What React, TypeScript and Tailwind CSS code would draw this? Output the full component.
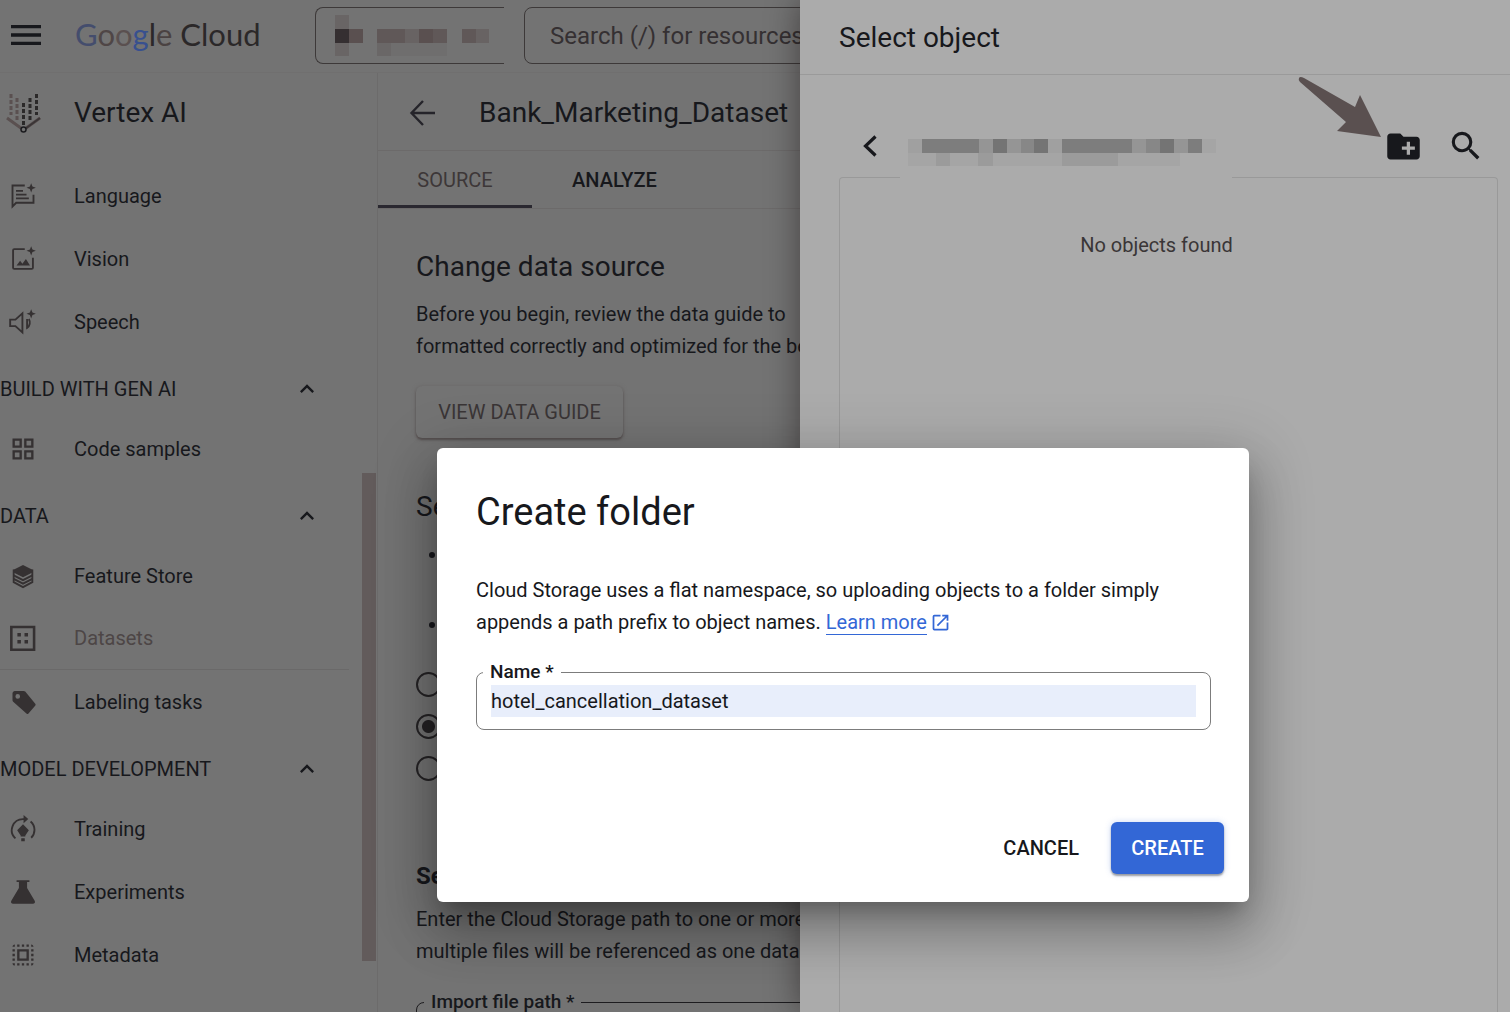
import type { ReactNode } from "react";
import {
  MdCreateNewFolder,
  MdGridView,
  MdKeyboardArrowUp,
  MdMenu,
  MdOpenInNew,
  MdSearch,
  MdSelectAll,
} from "react-icons/md";

const SPARKLE = "M19 1l1.1 2.9L23 5l-2.9 1.1L19 9l-1.1-2.9L15 5l2.9-1.1z";

function Icon({ children }: { children: ReactNode }) {
  return (
    <svg viewBox="0 0 24 24" className="size-7" fill="none" stroke="currentColor" strokeWidth="1.6" aria-hidden="true">
      {children}
    </svg>
  );
}

const LanguageIcon = () => (
  <Icon>
    <path d="M13.5 3H3v18l3.2-3.2H21V11" />
    <path d="M6 7.5h6M6 10.800h9M6 14h11" strokeWidth="1.5" />
    <path d={SPARKLE} fill="currentColor" stroke="none" />
  </Icon>
);

const VisionIcon = () => (
  <Icon>
    <path d="M13.500 3.500H4.500a1 1 0 0 0-1 1v15a1 1 0 0 0 1 1h15a1 1 0 0 0 1-1V11" />
    <path d="M6.500 17.500l3-4 2 2.500 3-4 3.500 5.500z" fill="currentColor" stroke="none" />
    <path d={SPARKLE} fill="currentColor" stroke="none" />
  </Icon>
);

const SpeechIcon = () => (
  <Icon>
    <path d="M1 10v5.500h4.500l6 5.500V4.500l-6 5.500z" />
    <path d="M15.500 9.500v7.500c2.500-1.500 3-5 1.500-7.500" />
    <path d={SPARKLE} fill="currentColor" stroke="none" />
  </Icon>
);

const FeatureStoreIcon = () => (
  <Icon>
    <path d="M12 2.500l8.500 4.300v2L12 13 3.500 8.800v-2z" fill="currentColor" stroke="none" />
    <path d="M4 6.500v10.800L12 21.500l8-4.200V6.500" />
    <path d="M4 11.500l8 4 8-4M4 14.500l8 4 8-4" strokeWidth="1.800" />
  </Icon>
);

const DatasetIcon = () => (
  <Icon>
    <path d="M2 2.500h19.500v19.500H2z" strokeWidth="2.200" />
    <path d="M7.200 7.700h3v3h-3zM13.300 7.700h3v3h-3zM7.200 13.800h3v3h-3zM13.300 13.800h3v3h-3z" fill="currentColor" stroke="none" />
  </Icon>
);

const LabelIcon = () => (
  <Icon>
    <path
      d="M3 4.500C3 3.500 4 2.500 5 2.500h7.500c.6 0 1 .2 1.400.6l8.600 10.400c.5.6.4 1.300-.1 1.800l-5.700 6.500c-.6.6-1.500.6-2-.1L3.600 11.800c-.4-.4-.6-.9-.6-1.400zM7.500 5.200a2 2 0 1 0 0 4 2 2 0 0 0 0-4z"
      fill="currentColor"
      fillRule="evenodd"
      stroke="none"
    />
  </Icon>
);

const TrainingIcon = () => (
  <Icon>
    <path d="M5.500 20A9.500 9.500 0 0 1 12 3.500h2M18.500 5.500A9.500 9.500 0 0 1 19 19.500" />
    <path d="M12.500 0l4 3.500-4 3.500z" fill="currentColor" stroke="none" />
    <path d="M12 8l5 5-3 4.500v1h-4v-1L7 13zM10.500 20h3v2.500h-3z" fill="currentColor" stroke="none" />
  </Icon>
);

const ExperimentsIcon = () => (
  <Icon>
    <path d="M6.500 2h11v1.500H15.500v5l6.500 11c.8 1.500 0 2.500-1.500 2.500h-17C2 22 1.200 21 2 19.500l6.500-11v-5h-2z" fill="currentColor" stroke="none" />
  </Icon>
);

function VertexLogo() {
  return (
    <svg viewBox="0 0 36 42" className="h-[42px] w-9 shrink-0" fill="none" aria-hidden="true">
      <g strokeWidth="3" strokeDasharray="4 2">
        <path d="M5 2v21M11 6v22" stroke="#5a5050" />
        <path d="M17.500 11v22M24 6v22M30.500 2v21" stroke="#2b2929" />
      </g>
      <path d="M1 26l16.500 12L34 26" stroke="#5a5050" strokeWidth="3" />
      <path d="M17.500 38L34 26" stroke="#3a3536" strokeWidth="2" />
      <circle cx="17.500" cy="37.500" r="2.500" fill="#737373" stroke="#1c1c1f" strokeWidth="1.500" />
    </svg>
  );
}

function NavItem({ icon, label, active }: { icon: ReactNode; label: string; active?: boolean }) {
  return (
    <a
      href="#"
      className={
        active
          ? "mr-7 flex h-[63px] items-center border-b border-[#6a6969] pl-[9px] text-[#4d4646]"
          : "mr-7 flex h-[63px] items-center pl-[9px]"
      }
    >
      <span className="w-[65px] shrink-0 text-[28px] text-[#353132]">{icon}</span>
      <span>{label}</span>
    </a>
  );
}

function NavSection({ label }: { label: string }) {
  return (
    <button type="button" className="flex h-16 w-full items-center justify-between pt-[7px] pr-[56px] text-left">
      <span>{label}</span>
      <MdKeyboardArrowUp className="size-7" />
    </button>
  );
}

function Sidebar() {
  return (
    <nav className="relative w-[378px] shrink-0 border-r border-[#6c6b6b]">
      <div className="flex h-[78px] items-center pt-0.5 pl-1.5">
        <VertexLogo />
        <span className="ml-8 text-[28px]">Vertex AI</span>
      </div>
      <div className="pt-[13px]">
        <NavItem icon={<LanguageIcon />} label="Language" />
        <NavItem icon={<VisionIcon />} label="Vision" />
        <NavItem icon={<SpeechIcon />} label="Speech" />
        <NavSection label="BUILD WITH GEN AI" />
        <NavItem icon={<MdGridView />} label="Code samples" />
        <NavSection label="DATA" />
        <NavItem icon={<FeatureStoreIcon />} label="Feature Store" />
        <NavItem icon={<DatasetIcon />} label="Datasets" active />
        <NavItem icon={<LabelIcon />} label="Labeling tasks" />
        <NavSection label="MODEL DEVELOPMENT" />
        <NavItem icon={<TrainingIcon />} label="Training" />
        <NavItem icon={<ExperimentsIcon />} label="Experiments" />
        <NavItem icon={<MdSelectAll />} label="Metadata" />
      </div>
      <div className="absolute top-[400px] right-px h-[488px] w-3.5 bg-[#625b5b]" />
    </nav>
  );
}

function TopBar() {
  return (
    <header className="flex h-[73px] shrink-0 items-center border-b border-[#706f6f] pb-0.5 pl-1.5">
      <button type="button" aria-label="Main menu">
        <MdMenu className="size-10" />
      </button>
      <a href="#" className="ml-[29px] w-[240px] font-['Lato',sans-serif] text-[31px] whitespace-nowrap">
        <span className="text-[#444d6d]">G</span>
        <span className="text-[#4f4646]">o</span>
        <span className="text-[#5a5050]">o</span>
        <span className="text-[#38508f]">g</span>
        <span className="text-[#2b2829]">l</span>
        <span className="text-[#4a4242]">e</span>
        <span className="text-[#2b2829]"> Cloud</span>
      </a>
      <button
        type="button"
        aria-label="Select a project"
        className="flex h-[57px] w-[189px] shrink-0 items-center rounded-l-lg border border-r-0 border-[#3d3939] pl-[19px]"
      >
        <svg viewBox="0 0 155 41" className="h-[41px] w-[155px]" aria-hidden="true">
          <path d="M0 0h14v41H0z" fill="#696565" />
          <path d="M0 14h14v14H0z" fill="#352f31" />
          <path d="M14 14h14v14H14zM84 14h14v14H84z" fill="#5a5050" />
          <path d="M42 14h28v14H42zM98 14h14v14H98zM127 14h14v14h-14z" fill="#605858" />
          <path d="M70 14h14v14H70zM141 14h13v14h-13z" fill="#686363" />
          <path d="M42 28h14v13H42z" fill="#6a6767" />
          <path d="M56 28h56v13H56z" fill="#6f6e6e" />
        </svg>
      </button>
      <input
        type="text"
        aria-label="Search"
        placeholder="Search (/) for resources, docs, products, and more"
        className="ml-5 h-[57px] min-w-0 flex-1 rounded-lg border border-[#3d3939] bg-transparent pt-0.5 pl-[25px] text-2xl placeholder:text-[#353032]"
      />
    </header>
  );
}

function SourceRadio({ checked }: { checked?: boolean }) {
  return (
    <input
      type="radio"
      name="source"
      aria-label="Data source"
      defaultChecked={checked}
      className="block size-[25px] appearance-none rounded-full border-2 border-[#252325] checked:bg-[radial-gradient(circle,#252325_0_6px,transparent_7px)]"
    />
  );
}

function DatasetPage() {
  return (
    <main className="min-w-0 flex-1 overflow-hidden whitespace-nowrap">
      <div className="flex h-[78px] items-center border-b border-[#6c6a6a] pt-0.5 pl-[29px]">
        <button type="button" aria-label="Back">
          <svg viewBox="0 0 32 32" className="size-8" fill="none" stroke="#25242a" strokeWidth="2.400" aria-hidden="true">
            <path d="M28 16H5M16 4L4.500 16 16 28" />
          </svg>
        </button>
        <h1 className="ml-10 text-[28px]">Bank_Marketing_Dataset</h1>
      </div>
      <div role="tablist" className="flex h-[58px] border-b border-[#6c6a6a]">
        <button type="button" role="tab" aria-selected="true" className="w-[154px] border-b-3 border-[#2a2830] pt-1 text-[#3d3738]">
          SOURCE
        </button>
        <button type="button" role="tab" aria-selected="false" className="w-[165px] font-medium">
          ANALYZE
        </button>
      </div>
      <div className="pl-[38px]">
        <h2 className="mt-[42px] text-[28px] leading-8">Change data source</h2>
        <p className="mt-[15px] leading-8">
          Before you begin, review the data guide to
          <br />
          formatted correctly and optimized for the best
        </p>
        <button type="button" className="mt-6 block h-[52px] w-[207px] rounded-md text-[#3a3536] shadow-[0_2px_2px_#565050,0_1px_4px_#656161]">
          VIEW DATA GUIDE
        </button>
        <h2 className="mt-[53px] text-[28px] leading-8">Select a data source</h2>
        <ul className="mt-[15px] list-disc pl-8">
          <li className="h-[70px] leading-8" />
          <li className="h-16 leading-8" />
        </ul>
        <div className="flex flex-col gap-[17px]">
          <SourceRadio />
          <SourceRadio checked />
          <SourceRadio />
        </div>
        <h3 className="mt-[79px] text-2xl font-bold">Select a file</h3>
        <p className="mt-[11px] leading-8">
          Enter the Cloud Storage path to one or more
          <br />
          multiple files will be referenced as one dataset.
        </p>
        <fieldset className="mt-[19px] mr-10 h-[70px] rounded-lg border border-[#1d1c1f]">
          <legend className="ml-[7px] px-[7px] text-[19px] leading-8 font-medium">
            <label htmlFor="import-path">Import file path *</label>
          </legend>
          <input id="import-path" type="text" className="w-full bg-transparent" />
        </fieldset>
      </div>
    </main>
  );
}

function Drawer() {
  return (
    <aside className="absolute inset-y-0 right-0 flex w-[710px] flex-col bg-[#ababab] shadow-[-2px_0_30px_rgba(10,0,0,0.4)]">
      <h2 className="flex h-[75px] shrink-0 items-center border-b border-[#9a9a9a] pt-0.5 pl-[39px] text-[28px]">Select object</h2>
      <div className="flex h-[102px] shrink-0 items-center pt-10 pr-[25px] pl-[58px]">
        <button type="button" aria-label="Back" className="mr-[18px]">
          <svg viewBox="0 0 24 24" className="size-6" fill="none" stroke="currentColor" strokeWidth="3.200" aria-hidden="true">
            <path d="M17.500 2.500L7.500 12l10 9.500" />
          </svg>
        </button>
        <svg viewBox="0 0 332 66" className="relative h-[66px] w-[332px] shrink-0" aria-hidden="true">
          <path d="M0 0h332v66H0z" fill="#ababab" />
          <path d="M8 26h14v14H8zM148 26h14v14h-14z" fill="#a0a0a0" />
          <path d="M22 26h57v14H22zM162 26h70v14h-70zM288 26h14v14h-14z" fill="#7d7d7d" />
          <path d="M79 26h14v14H79zM107 26h14v14h-14zM232 26h14v14h-14zM274 26h14v14h-14z" fill="#959595" />
          <path d="M93 26h14v14H93zM134 26h14v14h-14zM260 26h14v14h-14z" fill="#747474" />
          <path d="M121 26h13v14h-13zM246 26h14v14h-14z" fill="#878787" />
          <path d="M302 26h14v14h-14zM8 40h272v13H8z" fill="#a5a5a5" />
          <path d="M36 40h14v13H36zM78 40h15v13H78zM162 40h56v13h-56z" fill="#9b9b9b" />
        </svg>
        <div className="ml-auto flex items-center gap-6">
          <button type="button" aria-label="Create new folder">
            <MdCreateNewFolder className="size-[39px]" />
          </button>
          <button type="button" aria-label="Search">
            <MdSearch className="size-[38px]" />
          </button>
        </div>
      </div>
      <div className="mr-3 ml-[39px] flex-1 rounded-t-sm border border-b-0 border-[#999999] pt-[51px] pr-6 text-center leading-8 text-[#3a3637]">
        No objects found
      </div>
      <svg viewBox="0 0 90 66" className="absolute top-[74px] right-[124px] h-[66px] w-[90px]" aria-hidden="true">
        <path d="M3 4Q4 2 8 4L59 33 64 21 85 63 41 57 50 48 4 8Q2 6 3 4z" fill="#5a5050" />
      </svg>
    </aside>
  );
}

function CreateFolderDialog() {
  return (
    <div
      role="dialog"
      aria-labelledby="dialog-title"
      className="absolute top-[448px] left-[437px] w-[812px] rounded-md bg-white pt-10 pr-[38px] pb-7 pl-[39px] shadow-[0_14px_20px_-8px_rgba(0,0,0,0.25),0_30px_50px_4px_rgba(0,0,0,0.2),0_12px_60px_10px_rgba(0,0,0,0.16)]"
    >
      <h2 id="dialog-title" className="text-[38px] leading-12">
        Create folder
      </h2>
      <p className="mt-[38px] leading-8">
        Cloud Storage uses a flat namespace, so uploading objects to a folder simply appends a path prefix to object names.{" "}
        <a href="#" className="whitespace-nowrap text-[#3367d6]">
          <span className="border-b border-[#3367d6]">Learn more</span>
          <MdOpenInNew className="ml-[3px] inline size-[21px] align-[-4px]" />
        </a>
      </p>
      <fieldset className="mt-[18px] h-[74px] rounded-lg border border-[#7c7c7c] px-3.5">
        <legend className="-ml-2 px-[7px] text-[19px] leading-8 font-medium">
          <label htmlFor="folder-name">Name *</label>
        </legend>
        <input
          id="folder-name"
          type="text"
          defaultValue="hotel_cancellation_dataset"
          className="-mt-[3px] block h-8 w-full bg-[#e8eefb] outline-none"
        />
      </fieldset>
      <div className="-mr-[13px] mt-[92px] flex items-center justify-end gap-[13px] font-medium">
        <button type="button" className="h-[52px] px-[19px]">
          CANCEL
        </button>
        <button
          type="button"
          className="h-[52px] w-[113px] rounded-md bg-[#3367d6] text-white shadow-[0_2px_2px_rgba(0,0,0,0.35),0_0_6px_rgba(51,103,214,0.25)]"
        >
          CREATE
        </button>
      </div>
    </div>
  );
}

export default function App() {
  return (
    <div className="relative flex h-screen flex-col overflow-hidden bg-[#737373] font-['Roboto',sans-serif] text-xl text-[#17181c]">
      <TopBar />
      <div className="flex min-h-0 flex-1">
        <Sidebar />
        <DatasetPage />
      </div>
      <Drawer />
      <CreateFolderDialog />
    </div>
  );
}
